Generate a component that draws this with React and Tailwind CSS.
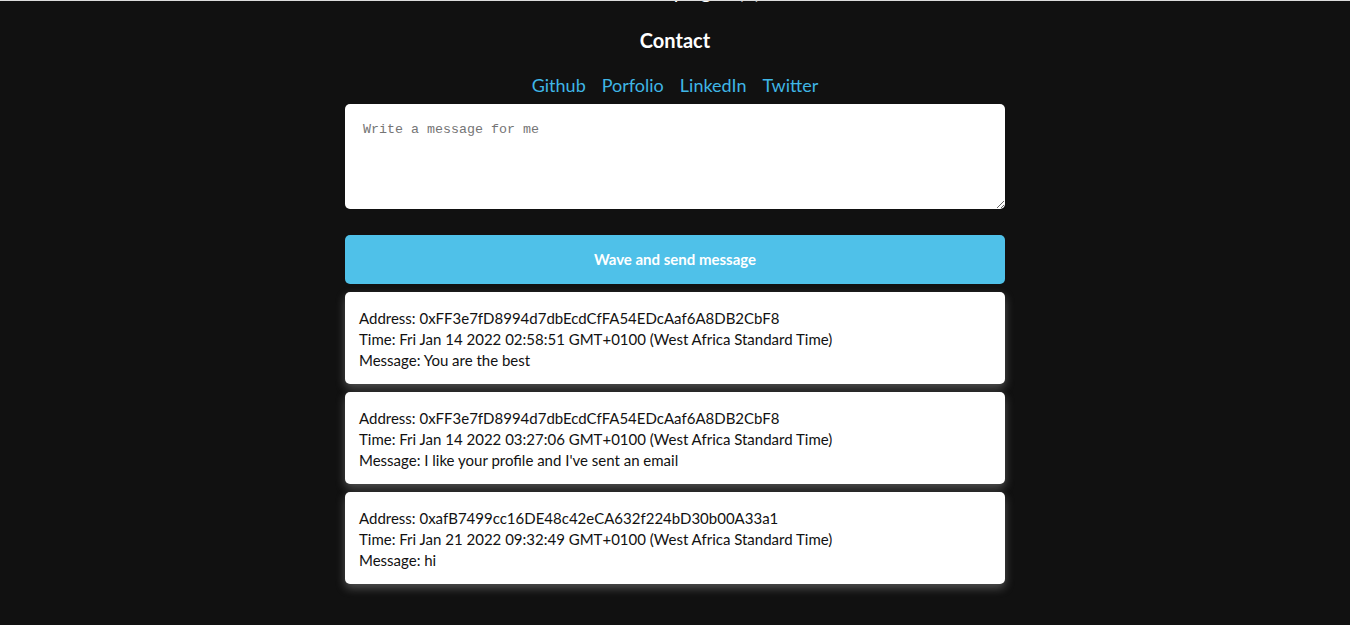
import React from 'react'

const waves = [
    {
        address: '0xFF3e7fD8994d7dbEcdCfFA54EDcAaf6A8DB2CbF8',
        time: 'Fri Jan 14 2022 02:58:51 GMT+0100 (West Africa Standard Time)',
        message: 'You are the best',
    },
    {
        address: '0xFF3e7fD8994d7dbEcdCfFA54EDcAaf6A8DB2CbF8',
        time: 'Fri Jan 14 2022 03:27:06 GMT+0100 (West Africa Standard Time)',
        message: "I like your profile and I've sent an email",
    },
    {
        address: '0xafB7499cc16DE48c42eCA632f224bD30b00A33a1',
        time: 'Fri Jan 21 2022 09:32:49 GMT+0100 (West Africa Standard Time)',
        message: 'hi',
    },
]

const links = ['Github', 'Porfolio', 'LinkedIn', 'Twitter']

const App = () => {
    return (
        <div className="min-h-[625px] bg-[#111111] border-t border-[#dcdcdc] font-['Lato',sans-serif] overflow-hidden">
            <div className="w-[660px] mx-auto flex flex-col items-center">
                <p className="-mt-[23px] h-[26px] text-[20px] text-white leading-[26px]">I've been pinged (3)</p>

                <h2 className="mt-[23px] text-white text-[20px] font-bold leading-[26px]">Contact</h2>

                <nav className="mt-[20px] flex items-center gap-[16px] text-[18px] leading-[24px] text-[#3fb6e6]">
                    {links.map((l) => (
                        <a key={l} href="#" className="hover:underline">{l}</a>
                    ))}
                </nav>

                <textarea
                    placeholder="Write a message for me"
                    className="mt-[7px] w-full h-[105px] bg-white rounded-[5px] px-[18px] py-[18px] text-[13.33px] leading-[16px] font-['Liberation_Mono',monospace] placeholder:text-[#757575] outline-none"
                />

                <button className="mt-[26px] w-full h-[49px] bg-[#4fc1e9] rounded-[5px] text-white text-[15px] font-bold">
                    Wave and send message
                </button>

                <div className="mt-[8px] w-full flex flex-col gap-[8px]">
                    {waves.map((w, i) => (
                        <div key={i} className="bg-white rounded-[5px] pt-[16px] pb-[13px] px-[14px] text-[15px] leading-[21px] text-[#111] shadow-[0_4px_10px_rgba(180,180,180,0.4)]">
                            <div>Address: {w.address}</div>
                            <div>Time: {w.time}</div>
                            <div>Message: {w.message}</div>
                        </div>
                    ))}
                </div>
            </div>
        </div>
    )
}

export default App
